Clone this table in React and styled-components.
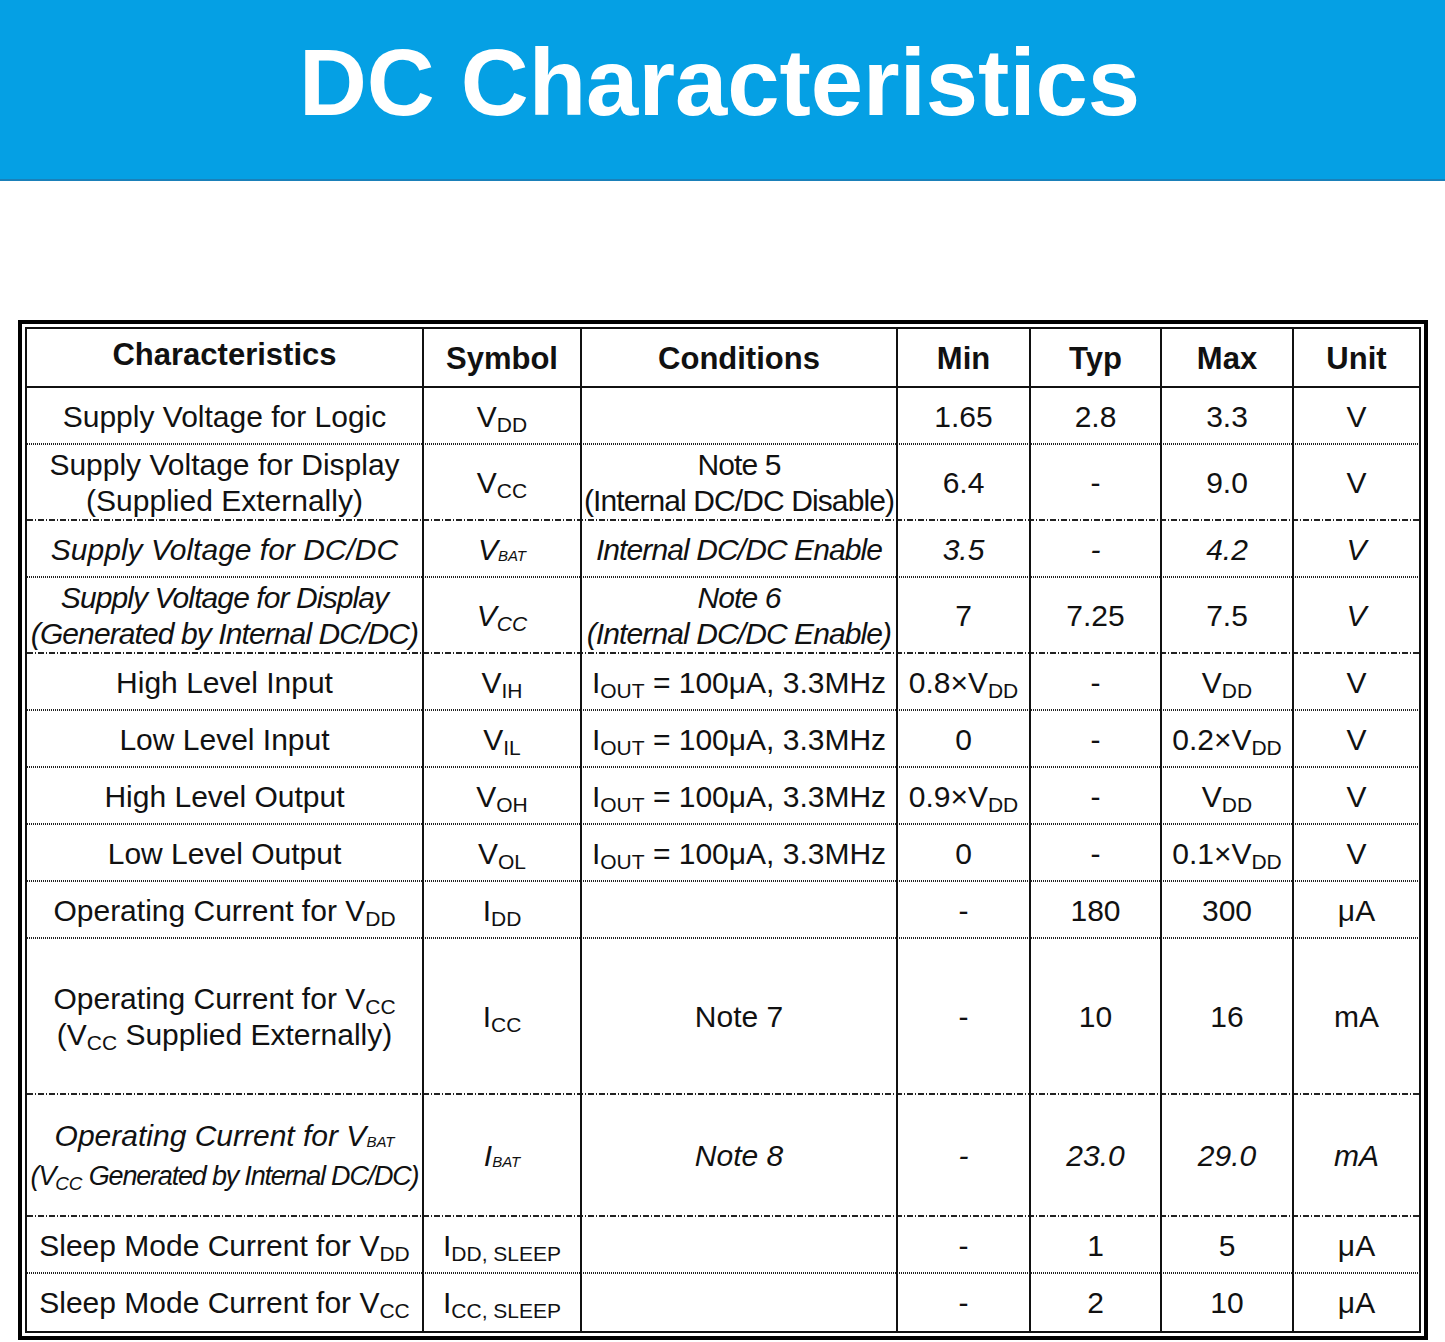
import React from 'react';
import styled, { createGlobalStyle, css } from 'styled-components';

const Global = createGlobalStyle`
  html, body { margin: 0; padding: 0; background: #fff; }
  body { font-family: "Liberation Sans", Arial, sans-serif; color: #111; }
  * { box-sizing: border-box; }
`;

const Page = styled.div`
  width: 1445px;
  min-height: 1342px;
  background: #fff;
`;

const Banner = styled.header`
  height: 181px;
  background: #05a0e4;
  border-bottom: 2px solid #1a80b9;
  display: flex;
  align-items: center;
  justify-content: center;
  padding-bottom: 14px;
`;

const Title = styled.h1`
  margin: 0;
  font-family: "Liberation Sans", Arial, sans-serif;
  font-weight: 700;
  font-size: 94px;
  line-height: normal;
  color: #fff;
  padding-right: 6px;
`;

const Frame = styled.div`
  margin: 139px 17px 0 18px;
  border: 4px solid #000;
  padding: 3px;
`;

const Table = styled.div`
  border: 2px solid #111;
  display: flex;
  flex-direction: column;
`;

const lines = {
  solid: css`background: linear-gradient(#111, #111) left bottom / 100% 2px no-repeat;`,
  dot: css`background: repeating-linear-gradient(90deg, #222 0 1px, transparent 1px 2px) left bottom / 100% 2px no-repeat;`,
  dashdot: css`background: repeating-linear-gradient(90deg, #222 0 6px, transparent 6px 8px, #222 8px 9px, transparent 9px 11px) left bottom / 100% 2px no-repeat;`,
  none: css``,
};

const Row = styled.div`
  display: grid;
  grid-template-columns: 397px 158px 316px 133px 131px 132px 1fr;
  height: ${(p) => p.$h}px;
  ${(p) => lines[p.$line || 'none']}
`;

const Cell = styled.div`
  display: flex;
  flex-direction: column;
  align-items: center;
  justify-content: center;
  text-align: center;
  white-space: nowrap;
  border-right: 2px solid #111;
  font-size: 30px;
  line-height: ${(p) => p.$lh || 36}px;
  font-style: ${(p) => (p.$italic ? 'italic' : 'normal')};
  letter-spacing: ${(p) => (p.$tight ? '-0.9px' : 'normal')};
  color: #111;
  &:last-child { border-right: none; }
`;

const HeadCell = styled(Cell)`
  font-weight: 700;
  font-size: 31px;
  padding-bottom: ${(p) => (p.$raise ? 8 : 0)}px;
`;

const Line = styled.span`
  display: block;
  ${(p) => p.$fs && css`font-size: ${p.$fs}px;`}
  ${(p) => p.$ls != null && css`letter-spacing: ${p.$ls}px;`}
`;

const Sub = styled.span`
  font-size: ${(p) => (p.$tiny ? '0.5em' : '0.7em')};
  vertical-align: ${(p) => (p.$tiny ? '-0.05em' : '-0.25em')};
  line-height: 0;
  letter-spacing: 0;
`;

const S = (base, sub, tiny) => (
  <>
    {base}
    <Sub $tiny={tiny}>{sub}</Sub>
  </>
);

const cond = <>{S('I', 'OUT')} = 100μA, 3.3MHz</>;

const rows = [
  {
    h: 57, line: 'dot', cells: [
      { c: 'Supply Voltage for Logic' },
      { c: S('V', 'DD') },
      { c: '' },
      { c: '1.65' }, { c: '2.8' }, { c: '3.3' }, { c: 'V' },
    ],
  },
  {
    h: 76, line: 'dashdot', cells: [
      { c: ['Supply Voltage for Display', '(Supplied Externally)'] },
      { c: S('V', 'CC') },
      { c: ['Note 5', '(Internal DC/DC Disable)'], t: true },
      { c: '6.4' }, { c: '-' }, { c: '9.0' }, { c: 'V' },
    ],
  },
  {
    h: 57, line: 'dot', cells: [
      { c: 'Supply Voltage for DC/DC', i: true },
      { c: S('V', 'BAT', true), i: true },
      { c: 'Internal DC/DC Enable', i: true, t: true },
      { c: '3.5', i: true }, { c: '-', i: true }, { c: '4.2', i: true }, { c: 'V', i: true },
    ],
  },
  {
    h: 76, line: 'dashdot', cells: [
      { c: ['Supply Voltage for Display', '(Generated by Internal DC/DC)'], i: true, t: true },
      { c: S('V', 'CC'), i: true },
      { c: ['Note 6', '(Internal DC/DC Enable)'], i: true, t: true },
      { c: '7' }, { c: '7.25' }, { c: '7.5' }, { c: 'V', i: true },
    ],
  },
  {
    h: 57, line: 'dot', cells: [
      { c: 'High Level Input' }, { c: S('V', 'IH') }, { c: cond },
      { c: <>0.8×{S('V', 'DD')}</> }, { c: '-' }, { c: S('V', 'DD') }, { c: 'V' },
    ],
  },
  {
    h: 57, line: 'dot', cells: [
      { c: 'Low Level Input' }, { c: S('V', 'IL') }, { c: cond },
      { c: '0' }, { c: '-' }, { c: <>0.2×{S('V', 'DD')}</> }, { c: 'V' },
    ],
  },
  {
    h: 57, line: 'dot', cells: [
      { c: 'High Level Output' }, { c: S('V', 'OH') }, { c: cond },
      { c: <>0.9×{S('V', 'DD')}</> }, { c: '-' }, { c: S('V', 'DD') }, { c: 'V' },
    ],
  },
  {
    h: 57, line: 'dot', cells: [
      { c: 'Low Level Output' }, { c: S('V', 'OL') }, { c: cond },
      { c: '0' }, { c: '-' }, { c: <>0.1×{S('V', 'DD')}</> }, { c: 'V' },
    ],
  },
  {
    h: 57, line: 'dot', cells: [
      { c: <>Operating Current for {S('V', 'DD')}</> }, { c: S('I', 'DD') }, { c: '' },
      { c: '-' }, { c: '180' }, { c: '300' }, { c: 'μA' },
    ],
  },
  {
    h: 156, line: 'dashdot', cells: [
      { c: [<>Operating Current for {S('V', 'CC')}</>, <>({S('V', 'CC')} Supplied Externally)</>] },
      { c: S('I', 'CC') }, { c: 'Note 7' },
      { c: '-' }, { c: '10' }, { c: '16' }, { c: 'mA' },
    ],
  },
  {
    h: 122, line: 'dashdot', lh: 40, cells: [
      {
        c: [
          { c: <>Operating Current for {S('V', 'BAT', true)}</>, ls: 0 },
          { c: <>({S('V', 'CC')} Generated by Internal DC/DC)</>, fs: 27, ls: -1.2 },
        ],
        i: true, t: true,
      },
      { c: S('I', 'BAT', true), i: true }, { c: 'Note 8', i: true },
      { c: '-', i: true }, { c: '23.0', i: true }, { c: '29.0', i: true }, { c: 'mA', i: true },
    ],
  },
  {
    h: 57, line: 'dot', cells: [
      { c: <>Sleep Mode Current for {S('V', 'DD')}</> }, { c: S('I', 'DD, SLEEP') }, { c: '' },
      { c: '-' }, { c: '1' }, { c: '5' }, { c: 'μA' },
    ],
  },
  {
    h: 57, line: 'none', cells: [
      { c: <>Sleep Mode Current for {S('V', 'CC')}</> }, { c: S('I', 'CC, SLEEP') }, { c: '' },
      { c: '-' }, { c: '2' }, { c: '10' }, { c: 'μA' },
    ],
  },
];

const heads = ['Characteristics', 'Symbol', 'Conditions', 'Min', 'Typ', 'Max', 'Unit'];

const toLines = (c) => {
  const list = Array.isArray(c) ? c : [c];
  return list.map((l, i) => {
    const item = l && typeof l === 'object' && 'c' in l ? l : { c: l };
    return (
      <Line key={i} $fs={item.fs} $ls={item.ls}>
        {item.c}
      </Line>
    );
  });
};

export default function App() {
  return (
    <Page>
      <Global />
      <Banner>
        <Title>DC Characteristics</Title>
      </Banner>
      <Frame>
        <Table>
          <Row $h={59} $line="solid">
            {heads.map((h, i) => (
              <HeadCell key={h} $raise={i === 0}>{h}</HeadCell>
            ))}
          </Row>
          {rows.map((r, ri) => (
            <Row key={ri} $h={r.h} $line={r.line}>
              {r.cells.map((cell, ci) => (
                <Cell key={ci} $italic={cell.i} $tight={cell.t} $lh={r.lh}>
                  {toLines(cell.c)}
                </Cell>
              ))}
            </Row>
          ))}
        </Table>
      </Frame>
    </Page>
  );
}
